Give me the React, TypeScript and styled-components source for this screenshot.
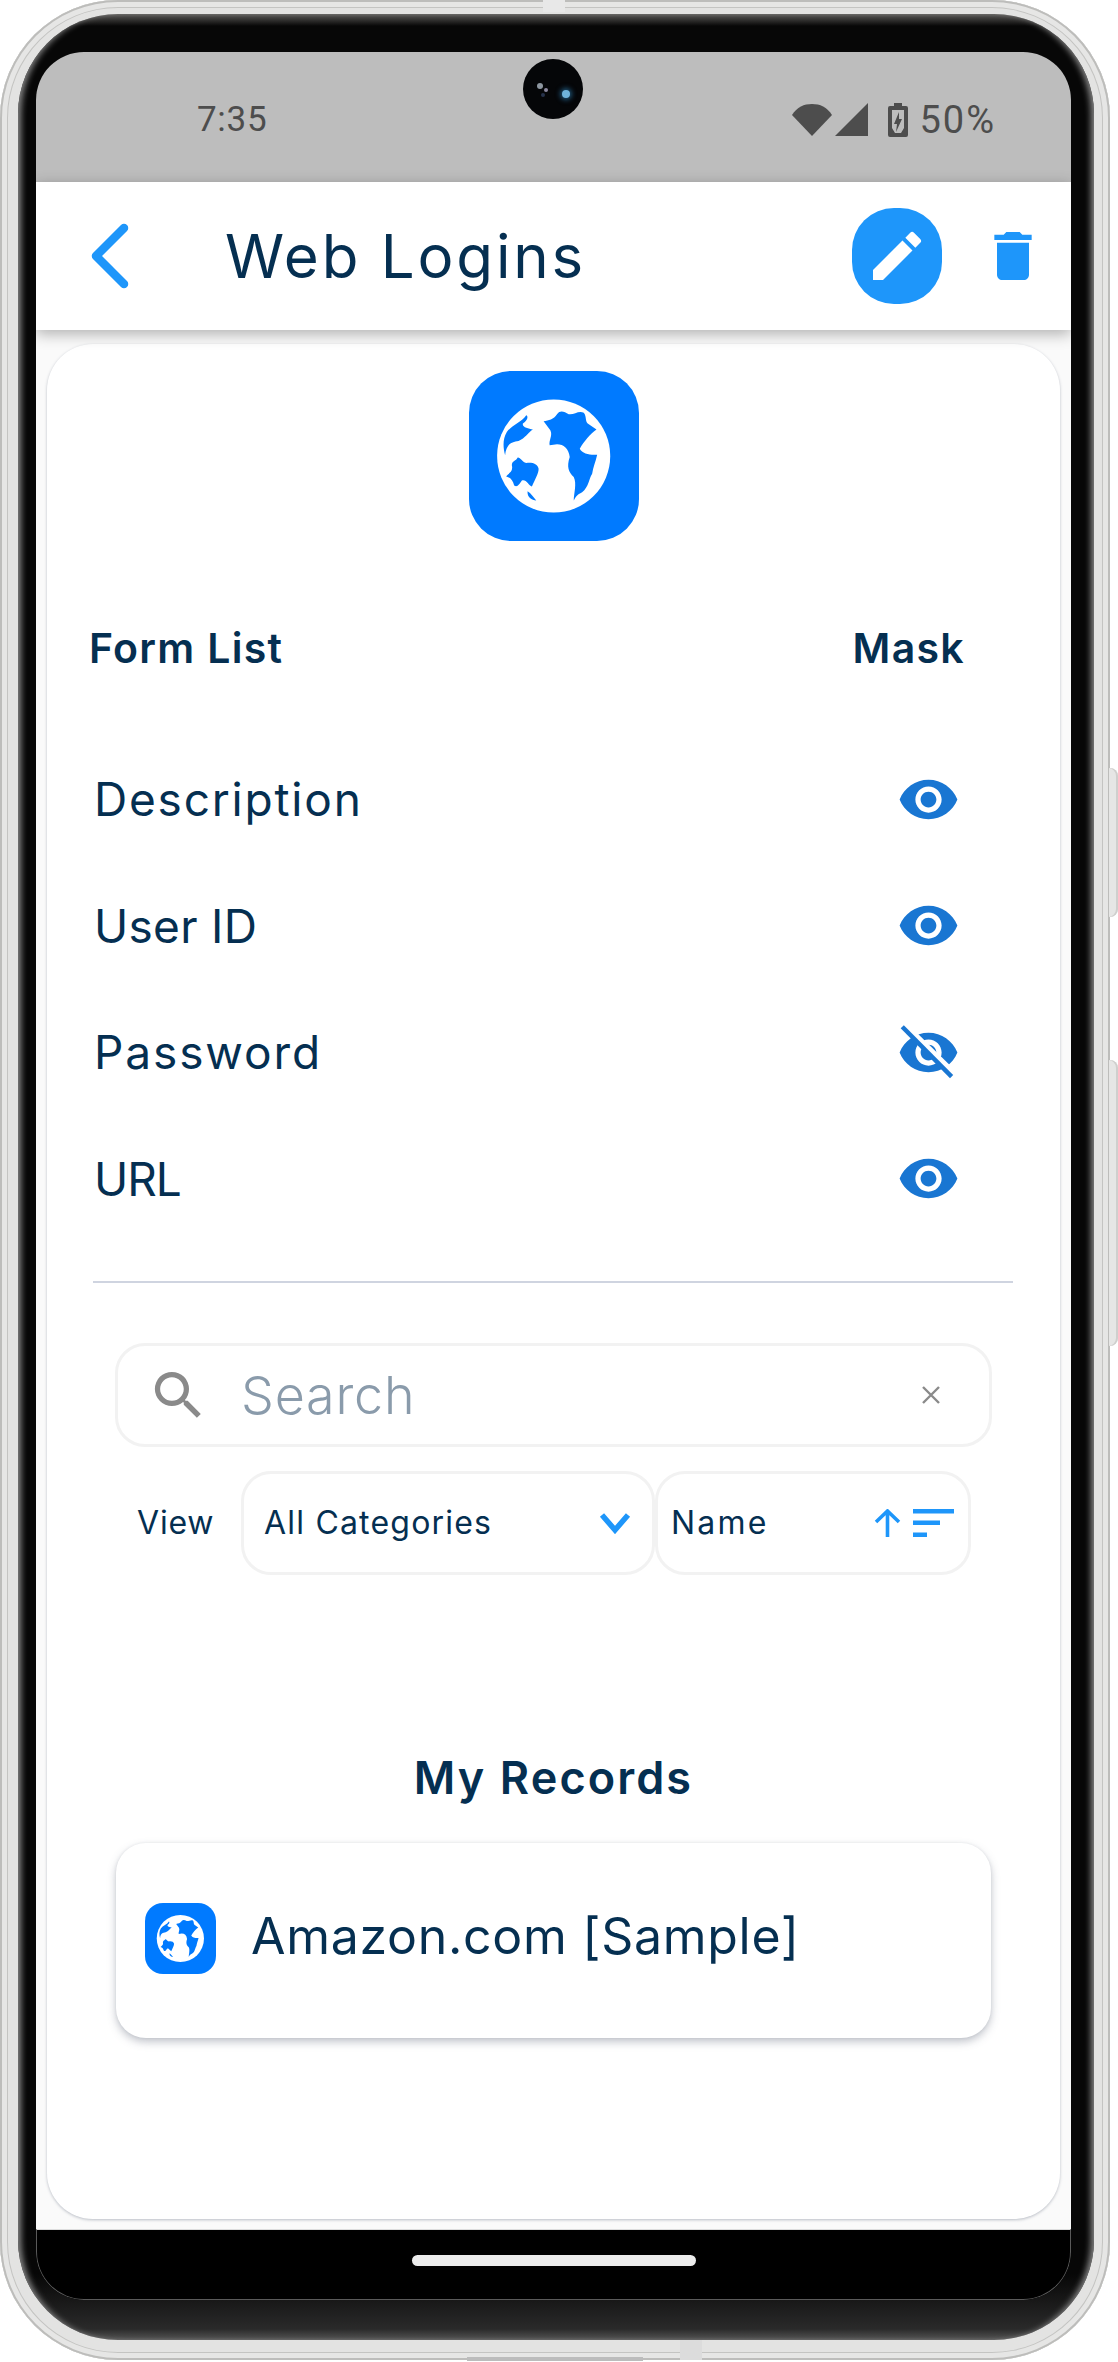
import styled, { createGlobalStyle } from 'styled-components'

const Global = createGlobalStyle`
  html, body { margin: 0; padding: 0; background: #fff; }
  body { font-family: Inter, "Liberation Sans", sans-serif; color: #052f51; }
  * { box-sizing: border-box; }
`

const Page = styled.div`
  width: 1118px;
  height: 2362px;
  position: relative;
  overflow: hidden;
`
const Shell = styled.div`
  width: 1110px;
  height: 2360px;
  padding: 14px 16px 20px 18px;
  border-radius: 118px;
  background: #e3e3e2;
  box-shadow: inset 0 0 0 2px #bdbdbb, inset 0 0 0 7px #e6e6e5, inset 0 0 0 8px #c4c4c2;
`
const Bezel = styled.div`
  height: 100%;
  padding: 38px 23px 40px 18px;
  border-radius: 100px;
  background: linear-gradient(180deg, #5c5a58 0, #070707 12px, #070707 2260px, #2a2a2a 2315px, #555 2326px);
  box-shadow: inset 6px 0 6px -3px #8a8a8a, inset -6px 0 6px -3px #8a8a8a;
`
const Screen = styled.div`
  height: 2248px;
  display: flex;
  flex-direction: column;
  border-radius: 48px;
  overflow: hidden;
  background: #000;
  position: relative;
`
const StatusBar = styled.div`
  height: 130px;
  flex: none;
  background: #bdbdbd;
  display: flex;
  align-items: center;
  padding: 5px 75px 0 161px;
  font-family: Roboto, sans-serif;
  font-size: 35px;
  color: #4d4d4d;
`
const Clock = styled.span`
  letter-spacing: 0.7px;
  margin-right: auto;
`
const Camera = styled.div`
  position: absolute;
  left: 487px;
  top: 7px;
  width: 60px;
  height: 60px;
  border-radius: 50%;
  background: #050608;
  &::before {
    content: '';
    position: absolute;
    left: 14px;
    top: 24px;
    width: 6px;
    height: 6px;
    border-radius: 50%;
    background: #8d96a0;
    box-shadow: 6px 4px 0 -1px #8d8aa0, 3px 9px 0 -1px #26324a;
  }
  &::after {
    content: '';
    position: absolute;
    left: 39px;
    top: 31px;
    width: 8px;
    height: 8px;
    border-radius: 50%;
    background: #6fb4dc;
    box-shadow: 0 0 5px 2px #1f5578;
  }
`
const StatusIcons = styled.div`
  display: flex;
  align-items: center;
  svg { display: block; fill: #4d4d4d; }
`
const Percent = styled.span`
  margin-left: 11px;
  font-size: 38px;
  letter-spacing: 2px;
`
const Header = styled.header`
  height: 148px;
  flex: none;
  display: flex;
  align-items: center;
  padding: 0 26px 0 55px;
  background: #fff;
  box-shadow: 0 4px 14px rgba(0, 0, 0, 0.3);
  position: relative;
  z-index: 1;
`
const Title = styled.h1`
  margin: 0 0 0 96px;
  font-size: 60px;
  font-weight: 400;
  line-height: 1;
  letter-spacing: 2.8px;
  color: #052f51;
`
const EditButton = styled.button`
  margin-left: auto;
  width: 90px;
  height: 96px;
  border: none;
  padding: 0;
  border-radius: 42px;
  background: #1e96fa;
  display: flex;
  align-items: center;
  justify-content: center;
  svg { fill: #fff; display: block; }
`
const IconButton = styled.button`
  margin-left: 39px;
  border: none;
  padding: 0;
  background: none;
  svg { fill: #1e96fa; display: block; }
`
const Body = styled.main`
  flex: 1;
  background: #fafafa;
  padding: 14px 11px 10px 11px;
  display: flex;
`
const Card = styled.section`
  flex: 1;
  background: #fff;
  border-radius: 46px;
  box-shadow: 0 1px 3px rgba(90, 100, 120, 0.4);
  display: flex;
  flex-direction: column;
  padding-top: 27px;
`
const Tile = styled.div<{ $size: number; $radius: number }>`
  width: ${(p) => p.$size}px;
  height: ${(p) => p.$size}px;
  border-radius: ${(p) => p.$radius}px;
  background: #007aff;
  flex: none;
  svg { display: block; width: 100%; height: 100%; }
`
const TileWrap = styled.div`
  display: flex;
  justify-content: center;
`
const FormHead = styled.div`
  margin-top: 77px;
  height: 60px;
  padding: 0 95px 0 42px;
  display: flex;
  align-items: center;
  justify-content: space-between;
  font-size: 41px;
  font-weight: 600;
  letter-spacing: 1.3px;
  color: #052f51;
`
const Rows = styled.div`
  margin-top: 58px;
  display: grid;
  grid-auto-rows: 126.5px;
`
const Row = styled.div<{ $track: number }>`
  display: flex;
  align-items: center;
  justify-content: space-between;
  padding: 0 100px 0 47px;
  font-size: 46px;
  letter-spacing: ${(p) => p.$track}px;
  svg { display: block; }
`
const Divider = styled.hr`
  margin: 38.5px 47px 0 46px;
  border: none;
  height: 2.5px;
  background: #cfd4e0;
`
const SearchBox = styled.div`
  margin: 60px 68px 0;
  height: 104px;
  border: 3px solid #f2f2f2;
  border-radius: 30px;
  display: flex;
  align-items: center;
  padding: 0 48px 0 29px;
  svg { display: block; }
`
const Placeholder = styled.span`
  margin-left: 31px;
  font-size: 52px;
  font-weight: 300;
  letter-spacing: 0.8px;
  color: #8a9bab;
  flex: 1;
`
const FilterRow = styled.div`
  margin: 23.5px 0 0 90px;
  display: flex;
  align-items: stretch;
  height: 104px;
  font-size: 32px;
`
const ViewLabel = styled.span`
  width: 104px;
  display: flex;
  align-items: center;
  letter-spacing: 0.8px;
`
const Select = styled.div<{ $w: number; $pl: number; $pr: number; $track: number }>`
  width: ${(p) => p.$w}px;
  border: 3px solid #f2f2f2;
  border-radius: 30px;
  padding: 0 ${(p) => p.$pr}px 0 ${(p) => p.$pl}px;
  display: flex;
  align-items: center;
  justify-content: space-between;
  letter-spacing: ${(p) => p.$track}px;
  svg { display: block; }
`
const SortIcons = styled.span`
  display: flex;
  align-items: center;
  gap: 12px;
`
const SectionTitle = styled.h2`
  margin: 173.5px 0 0;
  height: 60px;
  line-height: 60px;
  text-align: center;
  font-size: 45px;
  font-weight: 600;
  letter-spacing: 2.1px;
  color: #052f51;
`
const RecordCard = styled.div`
  margin: 35px 69px 0;
  height: 195px;
  border-radius: 30px;
  background: #fff;
  box-shadow: 0 4px 8px rgba(80, 90, 110, 0.35), 0 0 3px rgba(80, 90, 110, 0.1);
  display: flex;
  align-items: center;
  padding: 0 29px 5px;
  font-size: 50px;
  letter-spacing: 0.7px;
`
const RecordName = styled.span`
  margin: 0 0 4px 35px;
`
const NavBar = styled.div`
  height: 71px;
  flex: none;
  background: #000;
  border: 1px solid #5a5a5a;
  border-top-color: #ddd;
  border-radius: 0 0 48px 48px;
  display: flex;
  justify-content: center;
  padding-top: 25px;
`
const HomePill = styled.div`
  width: 284px;
  height: 11px;
  border-radius: 6px;
  background: #ececec;
`
const SideKey = styled.div<{ $top: number; $h: number }>`
  position: absolute;
  left: 1109px;
  top: ${(p) => p.$top}px;
  width: 9px;
  height: ${(p) => p.$h}px;
  background: #e6e6e5;
  border-radius: 0 8px 8px 0;
  box-shadow: inset -2px 0 0 #cfcfcd;
`
const TopNotch = styled.div`
  position: absolute;
  left: 543px;
  top: 0;
  width: 22px;
  height: 12px;
  background: #e8e8e8;
`
const BottomPort = styled.div`
  position: absolute;
  left: 467px;
  top: 2357px;
  width: 176px;
  height: 4px;
  background: #bcbcbc;
`
const BottomSeam = styled.div`
  position: absolute;
  left: 680px;
  top: 2340px;
  width: 22px;
  height: 20px;
  background: #dcdcdc;
`

const Globe = () => (
  <svg viewBox="87 93 508 508">
    <circle cx="340" cy="347" r="169" fill="#fff" />
    <g fill="#007aff">
      <path d="M310 243C325 240 340 238 350 222C360 208 372 215 385 222C400 225 415 210 430 218C440 230 432 245 445 252L468 268C450 280 430 305 418 325C425 340 450 345 470 343C465 365 458 380 455 400C445 415 445 440 425 455C410 462 405 470 400 480C400 460 410 430 400 410C385 395 378 380 388 350C385 325 370 312 350 312L328 315C325 300 338 285 330 270Z" />
      <path d="M258 225C265 228 262 240 248 250C245 262 265 265 278 268C265 275 255 295 235 302C215 305 198 310 195 345C188 320 188 295 200 275C215 255 245 245 258 225Z" />
      <path d="M232 352C240 350 245 365 258 368C275 365 292 370 295 385C295 400 285 415 275 438C265 435 258 415 245 420C238 430 232 442 222 435C218 420 212 412 198 408C205 398 220 395 215 375C215 360 228 362 232 352Z" />
      <path d="M262 452C272 458 280 470 288 480C275 478 260 470 262 452Z" />
    </g>
  </svg>
)

const EYE = 'M12 4.5C7 4.5 2.73 7.61 1 12c1.73 4.39 6 7.5 11 7.5s9.27-3.11 11-7.5c-1.73-4.39-6-7.5-11-7.5zM12 17c-2.76 0-5-2.24-5-5s2.24-5 5-5 5 2.24 5 5-2.24 5-5 5zm0-8c-1.66 0-3 1.34-3 3s1.34 3 3 3 3-1.34 3-3-1.34-3-3-3z'

const Eye = ({ off }: { off?: boolean }) => (
  <svg width="63" height="63" viewBox="0 0 24 24" fill="#1976d2">
    <path d={EYE} />
    {off && (
      <>
        <line x1="2.6" y1="1.6" x2="22" y2="20.6" stroke="#fff" strokeWidth="2.8" />
        <line x1="2" y1="2.2" x2="20.8" y2="21.2" stroke="#1976d2" strokeWidth="1.7" />
      </>
    )}
  </svg>
)

const fields = [
  { name: 'Description', track: 1.8 },
  { name: 'User ID', track: 0.3 },
  { name: 'Password', track: 1.9 },
  { name: 'URL', track: -1 },
]

export default function App() {
  return (
    <Page>
      <Global />
      <Shell>
        <Bezel>
          <Screen>
            <StatusBar>
              <Clock>7:35</Clock>
              <StatusIcons>
                <svg width="40" height="34" viewBox="0 0 40 34">
                  <path d="M0 12C5 4 12 1 20 1s15 3 20 11L20 33Z" />
                </svg>
                <svg width="34" height="33" viewBox="0 0 34 33" style={{ marginLeft: 3 }}>
                  <path d="M33 0V33H0Z" />
                </svg>
                <svg width="20" height="34" viewBox="0 0 20 34" style={{ marginLeft: 19 }}>
                  <path fillRule="evenodd" d="M6 0h8v3h4a2 2 0 0 1 2 2v27a2 2 0 0 1-2 2H2a2 2 0 0 1-2-2V5a2 2 0 0 1 2-2h4ZM4 7v18l3 5h6l3-5V7ZM11 9l-5 12h3l-1 8 6-13h-3Z" />
                </svg>
                <Percent>50%</Percent>
              </StatusIcons>
            </StatusBar>
            <Camera />
            <Header>
              <svg width="38" height="66" viewBox="0 0 38 66" fill="none">
                <path d="M33 5L5 33l28 28" stroke="#1e96fa" strokeWidth="8.5" strokeLinecap="round" strokeLinejoin="round" />
              </svg>
              <Title>Web Logins</Title>
              <EditButton aria-label="Edit">
                <svg width="64" height="64" viewBox="0 0 24 24">
                  <path d="M3 17.25V21h3.75L17.81 9.94l-3.75-3.75L3 17.25zM20.71 7.04a1 1 0 0 0 0-1.41l-2.34-2.34a1 1 0 0 0-1.41 0l-1.83 1.83 3.75 3.75 1.83-1.83z" />
                </svg>
              </EditButton>
              <IconButton aria-label="Delete">
                <svg width="64" height="64" viewBox="0 0 24 24">
                  <path d="M6 19c0 1.1.9 2 2 2h8c1.1 0 2-.9 2-2V7H6v12zM19 4h-3.5l-1-1h-5l-1 1H5v2h14V4z" />
                </svg>
              </IconButton>
            </Header>
            <Body>
              <Card>
                <TileWrap>
                  <Tile $size={170} $radius={42}><Globe /></Tile>
                </TileWrap>
                <FormHead>
                  <span>Form List</span>
                  <span>Mask</span>
                </FormHead>
                <Rows>
                  {fields.map((f) => (
                    <Row key={f.name} $track={f.track}>
                      <span>{f.name}</span>
                      <Eye off={f.name === 'Password'} />
                    </Row>
                  ))}
                </Rows>
                <Divider />
                <SearchBox>
                  <svg width="63" height="63" viewBox="0 0 24 24" fill="#8a8a8a">
                    <path d="M15.5 14h-.79l-.28-.27A6.471 6.471 0 0 0 16 9.5 6.5 6.5 0 1 0 9.5 16c1.61 0 3.09-.59 4.23-1.57l.27.28v.79l5 4.99L20.49 19l-4.99-5zm-6 0C7.01 14 5 11.99 5 9.5S7.01 5 9.5 5 14 7.01 14 9.5 11.99 14 9.5 14z" />
                  </svg>
                  <Placeholder>Search</Placeholder>
                  <svg width="20" height="20" viewBox="0 0 20 20" stroke="#8a8a8a" strokeWidth="2.4">
                    <path d="M2 2l16 16M18 2L2 18" />
                  </svg>
                </SearchBox>
                <FilterRow>
                  <ViewLabel>View</ViewLabel>
                  <Select $w={414} $pl={20} $pr={21} $track={1.2}>
                    <span>All Categories</span>
                    <svg width="32" height="22" viewBox="0 0 32 22" fill="none" stroke="#1e96fa" strokeWidth="5.5">
                      <path d="M3 3l13 15L29 3" />
                    </svg>
                  </Select>
                  <Select $w={316} $pl={13} $pr={14} $track={2.2}>
                    <span>Name</span>
                    <SortIcons>
                      <svg width="27" height="28" viewBox="0 0 27 28" fill="none" stroke="#1e96fa" strokeWidth="3.6">
                        <path d="M13.5 28V2M2 13L13.5 2 25 13" />
                      </svg>
                      <svg width="41" height="28" viewBox="0 0 41 28" fill="#1e96fa">
                        <rect width="41" height="4.5" />
                        <rect y="11.5" width="27" height="4.5" />
                        <rect y="23.5" width="14" height="4.5" />
                      </svg>
                    </SortIcons>
                  </Select>
                </FilterRow>
                <SectionTitle>My Records</SectionTitle>
                <RecordCard>
                  <Tile $size={71} $radius={18}><Globe /></Tile>
                  <RecordName>Amazon.com [Sample]</RecordName>
                </RecordCard>
              </Card>
            </Body>
            <NavBar>
              <HomePill />
            </NavBar>
          </Screen>
        </Bezel>
      </Shell>
      <TopNotch />
      <BottomPort />
      <BottomSeam />
      <SideKey $top={768} $h={149} />
      <SideKey $top={1060} $h={286} />
    </Page>
  )
}
